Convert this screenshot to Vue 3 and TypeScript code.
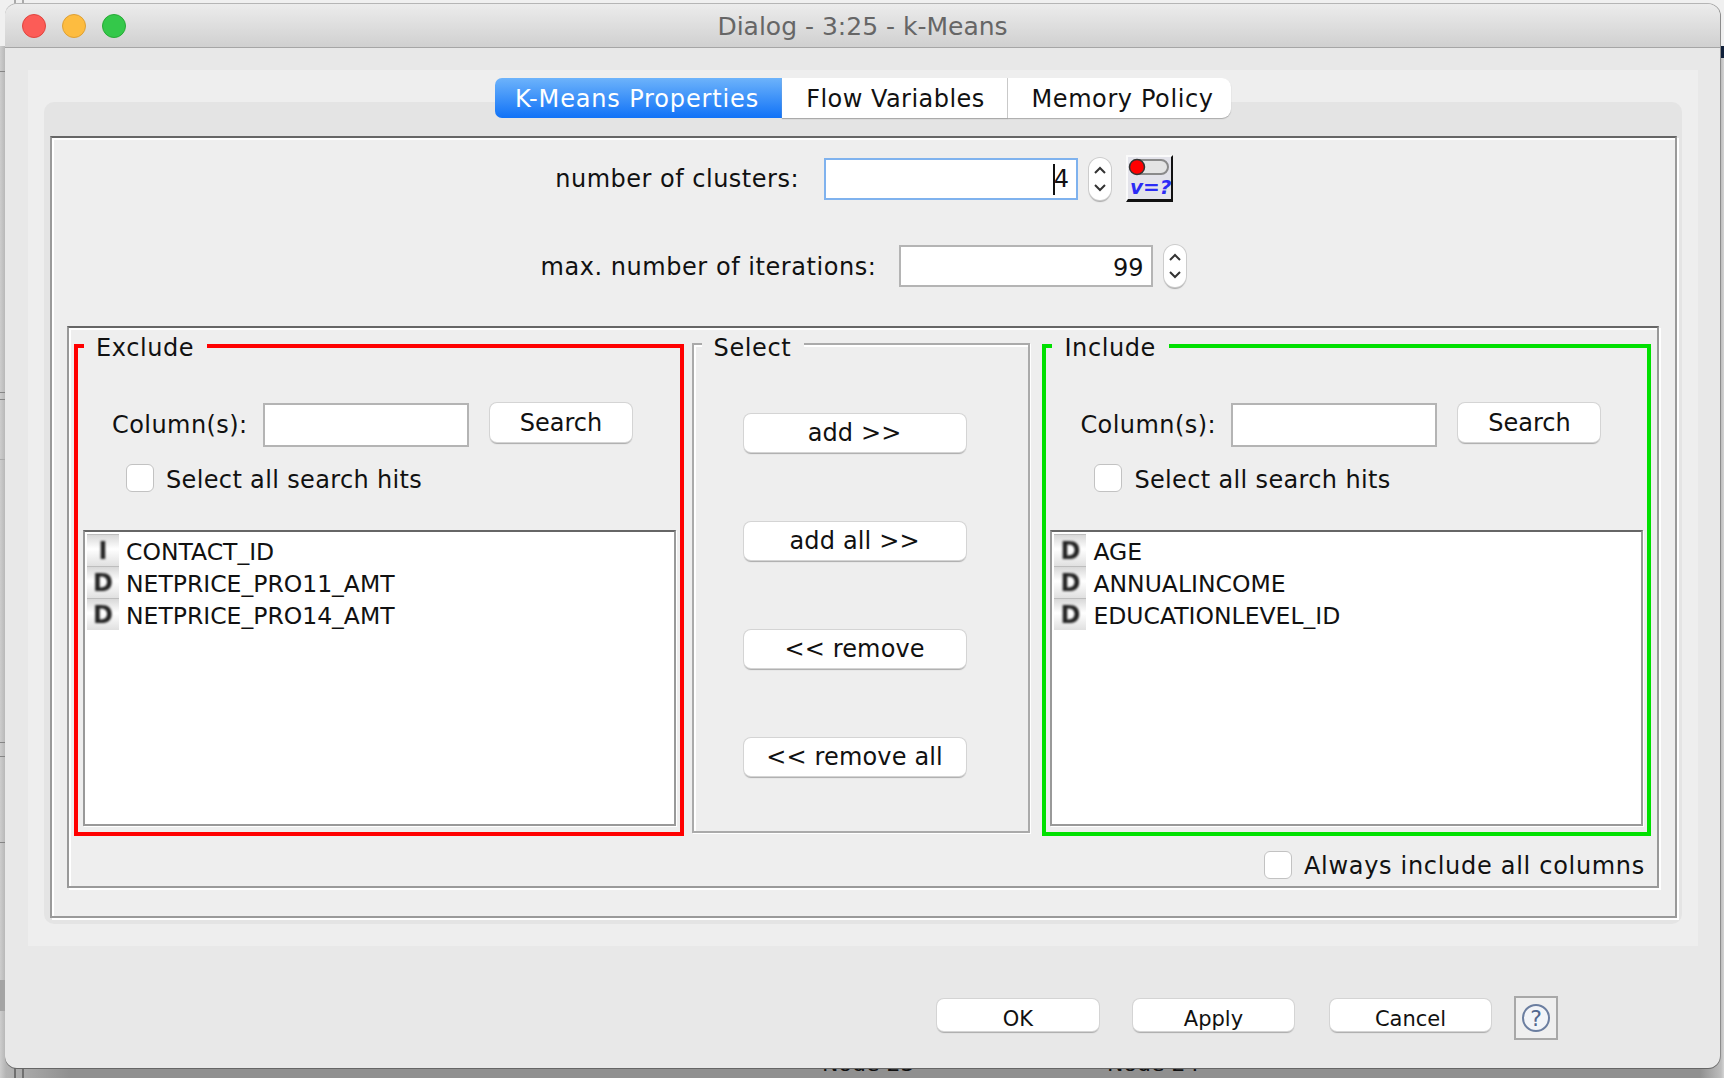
<script setup lang="ts">
import { ref } from 'vue'

type Col = { type: string; name: string }

const tabs = ref(['K-Means Properties', 'Flow Variables', 'Memory Policy'])
const excluded = ref<Col[]>([
  { type: 'I', name: 'CONTACT_ID' },
  { type: 'D', name: 'NETPRICE_PRO11_AMT' },
  { type: 'D', name: 'NETPRICE_PRO14_AMT' },
])
const included = ref<Col[]>([
  { type: 'D', name: 'AGE' },
  { type: 'D', name: 'ANNUALINCOME' },
  { type: 'D', name: 'EDUCATIONLEVEL_ID' },
])
const moves = ref(['add >>', 'add all >>', '<< remove', '<< remove all'])
const panes = [
  { key: 'exclude', title: 'Exclude', cols: excluded },
  { key: 'include', title: 'Include', cols: included },
]
</script>

<template>
  <div class="desk">
    <div class="back-line l1"></div>
    <div class="back-line l2"></div>
    <div class="back-line l3"></div>
    <div class="back-line l4"></div>
    <div class="back-line l5"></div>
    <div class="back-line l6"></div>
    <div class="back-line l7"></div>
    <div class="back-shade"></div>
    <div class="back-stub s1"></div>
    <div class="back-stub s2"></div>
    <div class="back-stub s3"></div>
    <div class="back-stub s4"></div>
    <div class="back-mark"></div>
    <div class="node-label n1">Node 23</div>
    <div class="node-label n2">Node 24</div>

    <section class="window">
      <header class="titlebar">
        <div class="lights">
          <span class="light red"></span>
          <span class="light yellow"></span>
          <span class="light green"></span>
        </div>
        <div class="title">Dialog - 3:25 - k-Means</div>
      </header>

      <div class="panel">
        <nav class="tabs">
          <div
            v-for="(t, i) in tabs"
            :key="t"
            class="tab"
            :class="['tab-' + i, { active: i === 0 }]"
          >{{ t }}</div>
        </nav>

        <div class="pane">
          <div class="content">
            <div class="param first">
              <span class="param-label w1">number of clusters:</span>
              <div class="num focus"><span class="caret"></span>4</div>
              <div class="spin">
                <svg width="14" height="32" viewBox="0 0 14 32">
                  <path d="M2 10 L7 5 L12 10 M2 22 L7 27 L12 22" fill="none" stroke="#333" stroke-width="2" />
                </svg>
              </div>
              <div class="flowvar">
                <svg width="43" height="42" viewBox="0 0 43 42">
                  <rect x="4" y="3" width="36" height="14" rx="7" fill="#e4e4e4" stroke="#8a8a8a" stroke-width="2" />
                  <circle cx="9" cy="10" r="7.5" fill="#f00" stroke="#333" stroke-width="1.5" />
                  <text x="2" y="37" class="vq">v=?</text>
                </svg>
              </div>
            </div>

            <div class="param second">
              <span class="param-label w2">max. number of iterations:</span>
              <div class="num plain">99</div>
              <div class="spin">
                <svg width="14" height="32" viewBox="0 0 14 32">
                  <path d="M2 10 L7 5 L12 10 M2 22 L7 27 L12 22" fill="none" stroke="#333" stroke-width="2" />
                </svg>
              </div>
            </div>

            <div class="outer">
              <div class="columns">
                <template v-for="(p, idx) in panes" :key="p.key">
                  <fieldset class="chooser" :class="p.key">
                    <div class="legend">{{ p.title }}</div>
                    <div class="search-row">
                      <span class="col-label">Column(s):</span>
                      <div class="text-field"></div>
                      <div class="btn search">Search</div>
                    </div>
                    <label class="check-row hits">
                      <span class="box"></span>
                      <span class="lbl">Select all search hits</span>
                    </label>
                    <ul class="list">
                      <li v-for="c in p.cols.value" :key="c.name" class="row">
                        <span class="type-icon"><b>{{ c.type }}</b></span>
                        <span class="row-name">{{ c.name }}</span>
                      </li>
                    </ul>
                  </fieldset>

                  <fieldset v-if="idx === 0" class="select-box">
                    <div class="legend">Select</div>
                    <div v-for="m in moves" :key="m" class="btn move">{{ m }}</div>
                  </fieldset>
                </template>
              </div>
              <label class="check-row always">
                <span class="box"></span>
                <span class="lbl">Always include all columns</span>
              </label>
            </div>
          </div>
        </div>
      </div>

      <footer class="actions">
        <div class="btn act ok">OK</div>
        <div class="btn act apply">Apply</div>
        <div class="btn act cancel">Cancel</div>
        <div class="help">
          <svg width="32" height="32" viewBox="0 0 32 32">
            <circle cx="16" cy="16" r="13" fill="#f2f4f8" stroke="#6b7ea0" stroke-width="2" />
            <text x="16" y="24" class="q">?</text>
          </svg>
        </div>
      </footer>
    </section>
  </div>
</template>

<style>
html, body { margin: 0; padding: 0; background: #fff; }
</style>

<style scoped>
.desk {
  position: relative;
  width: 1724px;
  height: 1078px;
  overflow: hidden;
  background: linear-gradient(90deg, #cdcdcd 0, #b4b4b4 6px, #909090 70px, #909090 1700px, #bdbdbd 1721px, #d4d4d4 1724px);
  font-family: "DejaVu Sans", sans-serif;
  color: #111;
}
.desk::before {
  content: "";
  position: absolute;
  left: 0;
  top: 0;
  right: 0;
  height: 46px;
  background: #f0f0f0;
}
.back-line { position: absolute; left: 0; width: 6px; height: 1px; background: #858585; }
.l1 { top: 71px; }
.l2 { top: 392px; }
.l3 { top: 399px; }
.l4 { top: 459px; background: #aaa; }
.l5 { top: 742px; }
.l6 { top: 756px; }
.l7 { top: 842px; }
.back-shade { position: absolute; left: 0; top: 980px; width: 6px; height: 31px; background: #a4a4a4; }
.back-stub { position: absolute; width: 2px; background: #707070; }
.s1 { left: 14px; top: 0; height: 4px; background: #aaa; }
.s2 { left: 22px; top: 0; height: 4px; background: #aaa; }
.s3 { left: 14px; top: 1068px; height: 10px; }
.s4 { left: 22px; top: 1068px; height: 10px; }
.back-mark { position: absolute; left: 1720px; top: 46px; width: 4px; height: 12px; background: #10203a; }
.node-label {
  position: absolute;
  top: 1052px;
  font-size: 22px;
  line-height: 24px;
  color: #111;
}
.n1 { left: 822px; }
.n2 { left: 1107px; }

.window {
  position: absolute;
  left: 5px;
  top: 4px;
  width: 1715px;
  height: 1064px;
  display: flex;
  flex-direction: column;
  background: #e8e8e8;
  border-radius: 12px;
  box-shadow: 0 1px 0 #666, 1px 0 0 #8c8c8c, 0 -1px 0 #b5b5b5;
}

.titlebar {
  position: relative;
  flex: none;
  height: 43px;
  display: flex;
  align-items: center;
  justify-content: center;
  border-radius: 12px 12px 0 0;
  border-bottom: 1px solid #a6a6a6;
  background: linear-gradient(#ececec, #d0d0d0);
}
.lights {
  position: absolute;
  left: 17px;
  top: 10px;
  display: flex;
  gap: 16px;
}
.light { width: 24px; height: 24px; border-radius: 50%; box-sizing: border-box; }
.red { background: #fc5c57; border: 1px solid #e0443e; }
.yellow { background: #fdbc40; border: 1px solid #dea034; }
.green { background: #34c84a; border: 1px solid #27aa35; }
.title {
  font-size: 25px;
  line-height: 30px;
  padding-top: 2px;
  color: #666;
  white-space: nowrap;
}

.panel {
  flex: none;
  width: 1670px;
  height: 876px;
  margin: 22px 0 0 23px;
  padding-top: 8px;
  box-sizing: border-box;
  background: #eee;
  display: flex;
  flex-direction: column;
}
.tabs {
  position: relative;
  z-index: 2;
  flex: none;
  height: 40px;
  display: flex;
  justify-content: center;
}
.tab {
  box-sizing: border-box;
  height: 40px;
  line-height: 43px;
  text-align: center;
  font-size: 24px;
  white-space: nowrap;
  background: #fff;
  box-shadow: 0 1px 1px #aaa;
}
.tab-0 { width: 287px; padding-right: 3px; border-radius: 7px 0 0 7px; letter-spacing: 0.85px; }
.tab-1 { width: 226px; padding-left: 2px; border-right: 1px solid #ccc; letter-spacing: 0.47px; }
.tab-2 { width: 223px; padding-left: 6px; border-radius: 0 9px 9px 0; letter-spacing: 0.6px; }
.tab.active {
  color: #fff;
  background: linear-gradient(#6db3fb, #1072f7);
  box-shadow: none;
}

.pane {
  flex: none;
  height: 822px;
  margin: -16px 16px 0 16px;
  padding: 34px 5px 6px 6px;
  box-sizing: border-box;
  background: #e4e4e4;
  border-radius: 10px;
}
.content {
  height: 782px;
  box-sizing: border-box;
  padding: 17px 16px 0 15px;
  border: 2px solid #999;
  border-top-color: #666;
  background: #eee;
  box-shadow: inset 2px 2px 0 #fff, 2px 2px 0 #fff;
}

.param {
  display: flex;
  justify-content: center;
  align-items: center;
  font-size: 24px;
}
.first { height: 47px; }
.second { height: 42px; margin-top: 43px; }
.param-label { text-align: right; white-space: nowrap; margin-right: 25px; letter-spacing: 0.5px; }
.w1 { width: 246px; }
.w2 { width: 333px; }
.second .param-label { margin-top: 2px; letter-spacing: 0.55px; }
.num {
  position: relative;
  box-sizing: border-box;
  width: 254px;
  height: 42px;
  line-height: 38px;
  padding-right: 7px;
  text-align: right;
  background: #fff;
  border: 2px solid #b4b4b4;
}
.num.plain { line-height: 42px; }
.num.focus { border-color: #7fb2ee; }
.caret {
  position: absolute;
  right: 21px;
  top: 4px;
  width: 2px;
  height: 31px;
  background: #111;
}
.spin {
  box-sizing: border-box;
  width: 22px;
  height: 42px;
  margin-left: 11px;
  display: flex;
  align-items: center;
  justify-content: center;
  background: #fff;
  border-radius: 11px;
  box-shadow: 0 0 0 1px #ccc, 0 2px 1px #aaa;
}
.flowvar {
  box-sizing: border-box;
  width: 47px;
  height: 47px;
  margin-left: 15px;
  background: #e3e3ea;
  border-top: 2px solid #fafafa;
  border-left: 2px solid #fafafa;
  border-right: 2px solid #111;
  border-bottom: 3px solid #111;
}
.flowvar svg { display: block; }
.vq {
  font-family: "DejaVu Sans", sans-serif;
  font-size: 20px;
  font-weight: 700;
  font-style: italic;
  fill: #2b2bf5;
}

.outer {
  box-sizing: border-box;
  height: 562px;
  margin-top: 39px;
  padding: 16px 6px 0 5px;
  border: 2px solid #999;
  border-top-color: #666;
  box-shadow: inset 2px 2px 0 #fff, 2px 2px 0 #fff;
}
.columns {
  display: flex;
  align-items: flex-start;
  height: 492px;
}
fieldset { margin: 0; min-width: 0; padding: 0; position: relative; box-sizing: border-box; }
.chooser {
  width: 610px;
  height: 492px;
  border: 4px solid;
}
.exclude { border-color: #f00; }
.include { border-color: #00e000; width: 609px; }
.legend {
  position: absolute;
  left: 6px;
  top: -12px;
  padding: 0 13px 0 12px;
  height: 24px;
  line-height: 24px;
  font-size: 24px;
  letter-spacing: 0.6px;
  background: #eee;
  white-space: nowrap;
}
.select-box {
  width: 339px;
  height: 490px;
  margin: -1px 12px 0 8px;
  padding: 69px 0 0 50px;
  border: 2px solid #aaa;
  box-shadow: inset 2px 2px 0 #fff, 1px 1px 0 #fff;
  display: flex;
  flex-direction: column;
  gap: 70px;
}
.select-box .legend { left: 8px; top: -9px; }

.search-row {
  display: flex;
  align-items: flex-start;
  margin: 55px 0 0 34px;
  font-size: 24px;
}
.col-label { width: 151px; line-height: 44px; white-space: nowrap; letter-spacing: 0.44px; }
.text-field {
  box-sizing: border-box;
  width: 206px;
  height: 44px;
  background: #fff;
  border: 2px solid #b4b4b4;
}
.btn {
  box-sizing: border-box;
  background: #fff;
  border-radius: 7px;
  text-align: center;
  font-size: 24px;
  white-space: nowrap;
  box-shadow: 0 0 0 1px #d4d4d4, 0 2px 1px #aaa;
}
.search { width: 142px; height: 39px; line-height: 41px; margin-left: 21px; }
.move { width: 222px; height: 38px; line-height: 38px; flex: none; letter-spacing: 0.15px; }

.check-row {
  display: flex;
  align-items: center;
  gap: 12px;
  font-size: 24px;
}
.box {
  flex: none;
  box-sizing: border-box;
  width: 28px;
  height: 28px;
  background: #fff;
  border: 1px solid #c2c2c2;
  border-radius: 6px;
}
.hits { margin: 17px 0 0 48px; height: 28px; }
.hits .lbl { margin-top: 4px; letter-spacing: 0.35px; }
.always { justify-content: flex-end; margin: 15px 6px 0 0; height: 28px; }
.always .lbl { margin-top: 2px; letter-spacing: 0.7px; }

.list {
  list-style: none;
  box-sizing: border-box;
  width: 593px;
  height: 296px;
  margin: 38px 0 0 5px;
  padding: 2px 0 0 2px;
  background: #fff;
  border: 2px solid #999;
  border-top-color: #666;
  box-shadow: 1px 1px 0 #fff;
}
.include .list { margin-left: 4px; }
.row {
  height: 32px;
  display: flex;
  align-items: center;
  gap: 7px;
  font-size: 23.5px;
  white-space: nowrap;
}
.row-name { margin-top: 4px; }
.type-icon {
  flex: none;
  box-sizing: border-box;
  width: 32px;
  height: 32px;
  text-align: center;
  line-height: 33px;
  background: linear-gradient(#d8d8d8, #fff 45%, #e0e0e0);
  border-top: 1px solid #bdbdbd;
  color: #222;
  font-size: 24px;
}
.type-icon b { display: inline-block; font-weight: 700; filter: blur(0.9px); }

.actions {
  flex: none;
  display: flex;
  align-items: flex-start;
  margin: 50px 0 0 932px;
}
.act { height: 32px; line-height: 40px; font-size: 21px; margin-top: 3px; }
.ok { width: 162px; }
.apply { width: 161px; margin-left: 34px; }
.cancel { width: 161px; margin-left: 36px; }
.help {
  box-sizing: border-box;
  width: 44px;
  height: 44px;
  margin-left: 23px;
  padding-top: 4px;
  padding-left: 4px;
  border: 2px solid #a8a8a8;
  background: #efefef;
}
.help svg { display: block; }
.q {
  font-family: "DejaVu Sans", sans-serif;
  font-size: 22px;
  font-weight: 400;
  text-anchor: middle;
  fill: #52678e;
}
</style>
